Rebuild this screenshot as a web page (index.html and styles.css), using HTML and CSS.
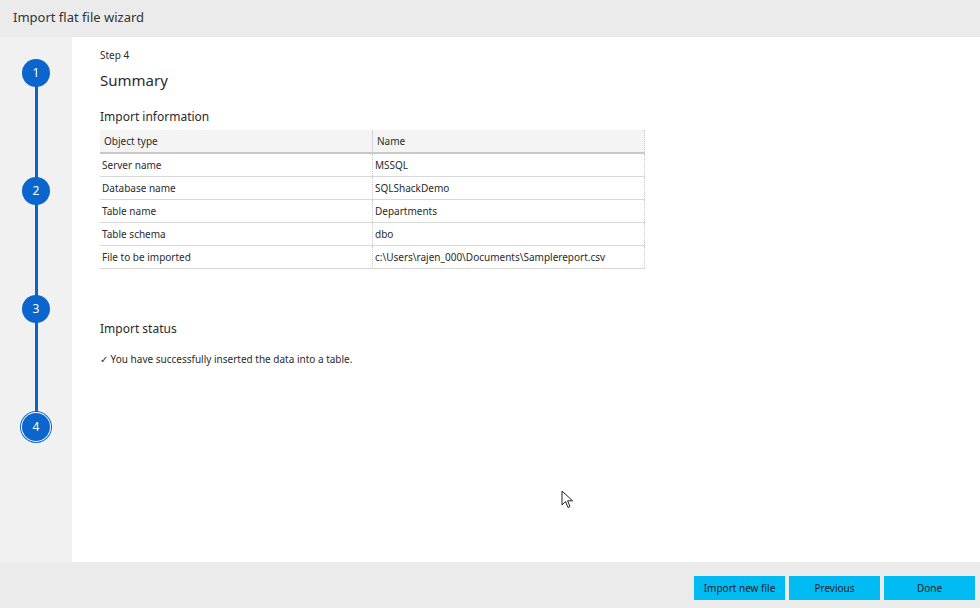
FILE: index.html
```html
<!DOCTYPE html>
<html lang="en">
<head>
    <meta charset="UTF-8">
    <title>Import flat file wizard</title>
    <link rel="stylesheet" href="styles.css">
</head>
<body>
    <div class="wizard">
        <div class="titlebar">Import flat file wizard</div>
        <div class="main">
            <div class="steps">
                <div class="track"></div>
                <div class="step s1">1</div>
                <div class="step s2">2</div>
                <div class="step s3">3</div>
                <div class="step s4 current">4</div>
            </div>
            <div class="content">
                <div class="step-label">Step 4</div>
                <h1>Summary</h1>
                <h2>Import information</h2>
                <table class="info">
                    <thead>
                        <tr><th class="col-type">Object type</th><th>Name</th></tr>
                    </thead>
                    <tbody>
                        <tr><td>Server name</td><td>MSSQL</td></tr>
                        <tr><td>Database name</td><td>SQLShackDemo</td></tr>
                        <tr><td>Table name</td><td>Departments</td></tr>
                        <tr><td>Table schema</td><td>dbo</td></tr>
                        <tr><td>File to be imported</td><td>c:\Users\rajen_000\Documents\Samplereport.csv</td></tr>
                    </tbody>
                </table>
                <h2 class="status-title">Import status</h2>
                <p class="status">&#10003; You have successfully inserted the data into a table.</p>
                <svg class="cursor" width="14" height="20" viewBox="0 0 14 20">
                    <path d="M1 1 L1 15 L4.5 11.5 L7 17.5 L9 16.6 L6.6 10.8 L11.5 10.8 Z" fill="#fff" stroke="#222" stroke-width="1"/>
                </svg>
            </div>
        </div>
        <div class="footer">
            <button>Import new file</button>
            <button>Previous</button>
            <button>Done</button>
        </div>
    </div>
</body>
</html>
```

FILE: styles.css
```css
body {
    margin: 0;
    font-family: "Segoe UI", "Noto Sans", "Open Sans", sans-serif;
    color: #2b2b2b;
    background: #fff;
}
.wizard {
    width: 980px;
    height: 608px;
    display: flex;
    flex-direction: column;
}
.titlebar {
    height: 37px;
    background: #ebebeb;
    padding-left: 13px;
    font-size: 13px;
    line-height: 34px;
    color: #333;
    box-sizing: border-box;
}
.main {
    flex: 1;
    display: flex;
}
.steps {
    width: 72px;
    background: #f1f1f1;
    position: relative;
}
.track {
    position: absolute;
    left: 35px;
    top: 36px;
    width: 3px;
    height: 354px;
    background: #0a64c8;
}
.step {
    position: absolute;
    left: 22px;
    width: 28px;
    height: 28px;
    border-radius: 50%;
    background: #0a66cc;
    color: #fff;
    font-size: 12px;
    line-height: 28px;
    text-align: center;
}
.s1 { top: 22px; }
.s2 { top: 140px; }
.s3 { top: 258px; }
.s4 { top: 376px; }
.step.current {
    box-shadow: 0 0 0 1px #fff, 0 0 0 2px #0a66cc;
}
.content {
    flex: 1;
    position: relative;
    padding: 11px 0 0 28px;
}
.step-label {
    font-size: 10px;
    line-height: 14px;
}
h1 {
    margin: 8px 0 0;
    font-size: 15px;
    font-weight: normal;
    line-height: 20px;
}
h2 {
    margin: 19px 0 0;
    font-size: 12px;
    font-weight: normal;
    line-height: 16px;
}
table.info {
    margin-top: 5px;
    width: 545px;
    border-collapse: collapse;
    font-size: 10px;
}
.info th {
    background: #f4f4f4;
    font-weight: normal;
    text-align: left;
    height: 22px;
    padding: 0 4px;
    border-bottom: 2px solid #c8c8c8;
    border-right: 1px solid #d4d4d4;
}
.info th.col-type {
    width: 264px;
}
.info td {
    height: 22px;
    padding: 0 2px;
    border-bottom: 1px solid #d8d8d8;
    border-right: 1px dotted #c8c8c8;
}
.info th:last-child, .info td:last-child {
    border-right: 1px dotted #c8c8c8;
}
.status-title {
    margin-top: 52px;
}
.status {
    margin: 15px 0 0;
    font-size: 10px;
}
.cursor {
    position: absolute;
    left: 489px;
    top: 453px;
}
.footer {
    height: 46px;
    background: #ebebeb;
    display: flex;
    justify-content: flex-end;
    align-items: flex-start;
    gap: 4px;
    padding: 14px 5px 0 0;
    box-sizing: border-box;
}
.footer button {
    width: 91px;
    height: 24px;
    background: #00bcf2;
    border: none;
    font-family: inherit;
    font-size: 10px;
    color: #222;
    padding: 0;
}
```
